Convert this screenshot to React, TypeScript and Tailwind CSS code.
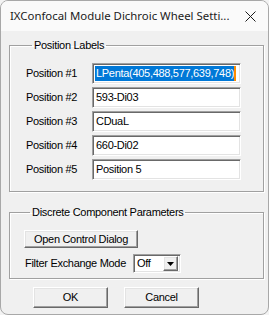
import React from "react";

const sunken =
  "border border-t-[#a0a0a0] border-l-[#a0a0a0] border-b-white border-r-white shadow-[inset_1px_1px_0_#696969,inset_-1px_-1px_0_#e3e3e3] bg-white";
const raised =
  "border border-t-white border-l-white border-b-[#696969] border-r-[#696969] shadow-[inset_-1px_-1px_0_#a0a0a0,inset_1px_1px_0_#e3e3e3] bg-[#f0f0f0]";
const group =
  "border border-[#a0a0a0] shadow-[inset_1px_1px_0_#fff,1px_1px_0_#fff]";

const positions = ["LPenta(405,488,577,639,748)", "593-Di03", "CDuaL", "660-Di02", "Position 5"];

export default function App() {
  return (
    <div className="w-[269px] h-[315px] bg-[#f3f3f3] overflow-hidden">
      <div
        className="w-[269px] h-[315px] rounded-[8px] border border-[#a8a8a8] overflow-hidden flex flex-col bg-[#f0f0f0] text-[11px] tracking-[-0.3px] text-black"
        style={{ fontFamily: '"Liberation Sans", Arial, sans-serif' }}
      >
        {/* title bar */}
        <div className="h-[30px] shrink-0 bg-[#fafafa] flex items-center pl-[9px] pr-[10px] justify-between tracking-normal">
          <span className="text-[11.4px] text-[#1b1b1b]" style={{ fontFamily: '"Noto Sans", sans-serif' }}>
            IXConfocal Module Dichroic Wheel Setti...
          </span>
          <svg width="11" height="11" viewBox="0 0 11 11" className="mr-[2px]">
            <path d="M0.5 0.5 L10.5 10.5 M10.5 0.5 L0.5 10.5" stroke="#1b1b1b" strokeWidth="1" />
          </svg>
        </div>

        <div className="flex flex-col pl-[8px] pr-[4px]">
          <fieldset className={`${group} mt-[8px] pl-[16px] pt-[11px] pb-[11px]`}>
            <legend className="ml-[6px] px-[2px] leading-[13px]">Position Labels</legend>
            <div className="flex flex-col gap-[3px]">
              {positions.map((p, i) => (
                <div key={i} className="flex items-center">
                  <span className="w-[66px] leading-[13px]">Position #{i + 1}</span>
                  <div className={`${sunken} w-[149px] h-[21px] flex items-center pl-[2px]`}>
                    {i === 0 ? (
                      <>
                        <span className="bg-[#0078d7] text-white leading-[15px] pl-[1px]">{p}</span>
                        <span className="w-[2px] h-[15px] bg-[#ff8c00]" />
                      </>
                    ) : (
                      <span className="leading-[15px] pl-[1px]">{p}</span>
                    )}
                  </div>
                </div>
              ))}
            </div>
          </fieldset>

          <fieldset className={`${group} mt-[14px] pl-[14px] pt-[11px] pb-[5px]`}>
            <legend className="ml-[6px] px-[2px] leading-[13px]">Discrete Component Parameters</legend>
            <button className={`${raised} w-[114px] h-[18px] flex items-center justify-center leading-[13px]`}>
              Open Control Dialog
            </button>
            <div className="flex items-center mt-[6px]">
              <span className="w-[109px] pl-[1px] leading-[13px]">Filter Exchange Mode</span>
              <div className={`${sunken} w-[48px] h-[19px] flex items-center pl-[3px] pr-[2px] justify-between`}>
                <span className="leading-[13px]">Off</span>
                <div className={`${raised} w-[15px] h-[15px] flex items-center justify-center`}>
                  <svg width="7" height="4" viewBox="0 0 7 4">
                    <path d="M0 0 H7 L3.5 4 Z" fill="#000" />
                  </svg>
                </div>
              </div>
            </div>
          </fieldset>

          <div className="flex gap-[16px] pl-[24px] mt-[8px]">
            <button className={`${raised} w-[75px] h-[21px] leading-[13px]`}>OK</button>
            <button className={`${raised} w-[75px] h-[21px] leading-[13px]`}>Cancel</button>
          </div>
        </div>
      </div>
    </div>
  );
}
